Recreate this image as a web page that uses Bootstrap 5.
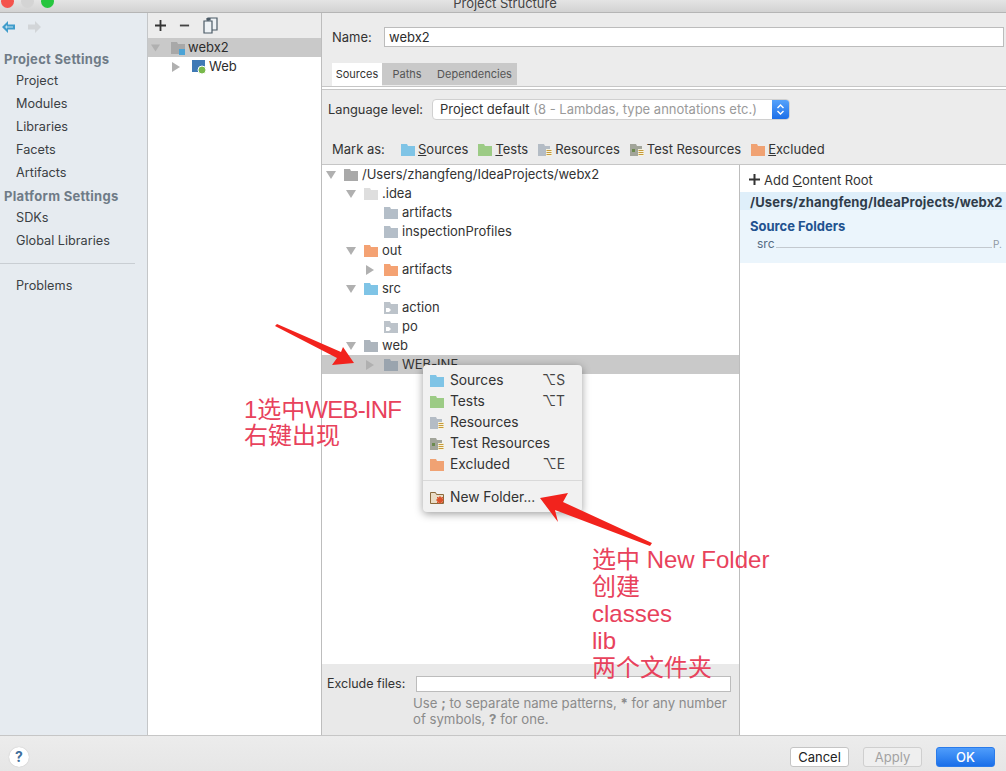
<!DOCTYPE html>
<html lang="en">
<head>
  <meta charset="UTF-8" />
  <meta name="viewport" content="width=device-width, initial-scale=1.0" />
  <title>Project Structure</title>
  <link href="https://cdn.jsdelivr.net/npm/bootstrap@5.3.3/dist/css/bootstrap.min.css" rel="stylesheet">
  <style>
    body { margin: 0; background: #fff; font-family: Inter, "Liberation Sans", Arial, sans-serif; font-size: 13px; color: #2c2c2c; }
    .ij-win { position: relative; width: 1006px; height: 771px; overflow: hidden; }
    .ij-title { height: 13px; background: linear-gradient(#e4e4e4, #d2d2d2); border-bottom: 1px solid #b5b5b5; overflow: hidden; position: relative; }
    .ij-title-text { text-align: center; line-height: 6px; font-size: 13px; color: #444; padding-left: 4px; }
    .ij-lights { position: absolute; left: 1px; top: -5px; gap: 7px; }
    .ij-light { width: 13px; height: 13px; border-radius: 50%; }
    .ij-main { height: 722px; }

    .ij-side { width: 148px; background: #e6ebf0; border-right: 1px solid #c4c6c8; flex: none; }
    .ij-hist { height: 28px; padding: 0 2px; gap: 13px; }
    .ij-side-h { font-weight: 700; color: #6f7b87; font-size: 13px; letter-spacing: .3px; padding-left: 4px; line-height: 19px; margin-top: 3px; }
    .ij-side-h-first { margin-top: 9px; }
    .ij-side-i { padding-left: 16px; line-height: 23px; color: #3b3f44; height: 23px; font-size: 12.7px; }
    .ij-side-sep { height: 1px; background: #c9ced3; margin: 11px 12px 10px 0; }

    .ij-mods { width: 174px; flex: none; background: #fff; border-right: 1px solid #bdbdbd; }
    .ij-tools { height: 25px; background: #ececec; padding-left: 7px; gap: 13px; }
    .ij-row { height: 19px; line-height: 19px; white-space: nowrap; }
    .ij-row-sel { background: #c9c9c9; }
    .ij-mods .ij-row { padding-left: 3px; }
    .ij-twist { width: 18px; flex: none; display: flex; align-items: center; }
    .ij-twist-mod { margin-left: 21px; }
    .ij-ico { width: 14px; height: 12px; flex: none; margin-right: 4px; }
    .ij-ico-root { margin-left: 2px; margin-right: 3px; }
    .ij-ico-web { margin-left: 2px; margin-right: 2px; flex: none; }

    .ij-right { flex: 1 1 auto; min-width: 0; background: #ececec; }
    .ij-name { height: 50px; padding: 14px 2px 0 10px; }
    .ij-name label { width: 52px; flex: none; color: #333; line-height: 20px; }
    .ij-input { height: 20px; border: 1px solid #bcbcbc; border-radius: 0; padding: 0 4px; font-size: 13px; color: #2c2c2c; background: #fff; box-shadow: none; }
    .ij-tabs { height: 23px; margin-left: 10px; }
    .ij-tab { font-size: 11px; color: #555; background: #c9c9c9; line-height: 22px; height: 22px; text-align: center; white-space: nowrap; }
    .ij-tab-on { background: #fff; color: #333; height: 24px; width: 50px; }
    .ij-tab-paths { width: 50px; }
    .ij-tab-deps { width: 85px; }
    .ij-rule { height: 4px; background: #fff; border-top: 1px solid #c6c6c6; border-bottom: 1px solid #c6c6c6; }
    .ij-lang { height: 41px; padding: 9px 0 0 6px; }
    .ij-lang > span:first-child { width: 104px; flex: none; color: #333; line-height: 21px; font-size: 12.8px; }
    .ij-select { width: 358px; height: 21px; background: #fff; border: 1px solid #d0d0d0; border-radius: 4px; padding-left: 7px; line-height: 19px; position: relative; overflow: hidden; color: #333; white-space: nowrap; }
    .ij-select em { font-style: normal; color: #9a9a9a; }
    .ij-step { position: absolute; right: 0; top: 0; bottom: 0; width: 17px; background: linear-gradient(#55a2fb, #1c6fe8); display: flex; align-items: center; justify-content: center; }
    .ij-mark { height: 33px; padding: 5px 0 0 10px; }
    .ij-mark > span:first-child { width: 69px; flex: none; color: #333; }
    .ij-mark-i { margin-right: 10px; color: #333; white-space: nowrap; }
    .ij-mark-i .ij-ico { margin-right: 3px; }
    .ij-body { height: 571px; border-top: 1px solid #c6c6c6; }
    .ij-treecol { width: 418px; flex: none; border-right: 1px solid #bdbdbd; background: #fff; }
    .ij-tree { flex: 1 1 auto; padding-top: 0; }
    .ij-tree .ij-row { display: flex; align-items: center; color: #333; }
    .ij-l0 { padding-left: 4px; }
    .ij-l1 { padding-left: 24px; }
    .ij-l2 { padding-left: 44px; }
    .ij-excl { height: 71px; background: #e9e9e9; padding: 11px 8px 0 5px; }
    .ij-excl label { width: 89px; flex: none; color: #333; font-size: 12.5px; }
    .ij-excl .ij-input { height: 16px; width: 315px; }
    .ij-hint { color: #8b8b8b; padding-left: 86px; line-height: 16px; font-size: 13.2px; margin-top: 1px; white-space: nowrap; }

    .ij-roots { flex: 1 1 auto; background: #fff; min-width: 0; overflow: hidden; }
    .ij-add { height: 27px; padding: 2px 0 0 9px; color: #333; line-height: 18px; }
    .ij-path { height: 18px; line-height: 20px; background: #dfeffa; font-weight: 700; letter-spacing: .15px; padding-left: 10px; color: #2f3c4a; white-space: nowrap; overflow: hidden; }
    .ij-srcs { height: 53px; background: #ebf5fc; padding: 7px 0 0 10px; }
    .ij-srcs-h { font-weight: 700; color: #22528f; line-height: 19px; }
    .ij-srcs-r { padding-left: 7px; color: #556b82; line-height: 16px; font-size: 12px; white-space: nowrap; }
    .ij-srcs-r i { flex: 1 1 auto; border-bottom: 1px solid #c3c9cf; height: 12px; margin: 0 0 0 1px; }
    .ij-srcs-r b { font-weight: 400; color: #8f98a2; font-size: 10px; width: 14px; padding-left: 1px; overflow: hidden; }

    .ij-foot { height: 36px; background: linear-gradient(#ececec, #e6e6e6); border-top: 1px solid #c6c6c6; padding: 11px 11px 0 9px; }
    .ij-help { width: 20px; height: 20px; border-radius: 50%; background: #fff; color: #3f6f9c; font-weight: 700; font-size: 14px; line-height: 20px; text-align: center; box-shadow: 0 0 1px #aaa; }
    .ij-btn { width: 59px; height: 20px; padding: 0; font-size: 13px; line-height: 18px; border-radius: 3px; background: #fff; border: 1px solid #c4c4c4; color: #222; margin-left: 14px; }
    .ij-btn:disabled { background: #efefef; color: #a2a2a2; border-color: #cfcfcf; opacity: 1; }
    .ij-btn-ok { background: linear-gradient(#4f9dfb, #1a6fe9); border-color: #2a7bea; color: #fff; font-weight: 500; }

    .ij-menu { left: 423px; top: 365px; width: 159px; min-width: 0; padding: 5px 0 4px; border: 0; border-radius: 4px; background: #f1f1f1; box-shadow: 0 2px 9px rgba(0,0,0,.38); font-size: 13.8px; margin: 0; }
    .ij-menu .dropdown-item { display: flex; align-items: center; height: 21px; padding: 0 0 0 7px; color: #333; line-height: 21px; }
    .ij-menu .ij-ico { margin-right: 6px; }
    .ij-key { margin-left: auto; padding-right: 17px; color: #444; }
    .ij-menu .dropdown-divider { margin: 5px 0 6px; border-color: #d9d9d9; opacity: 1; }

    .ij-note { position: absolute; z-index: 1001; color: #e8425c; font-family: "Liberation Sans", "Noto Sans CJK SC", sans-serif; font-size: 24px; white-space: nowrap; }
    .ij-note-a { left: 244px; top: 397px; line-height: 26px; }
    .ij-note-b { left: 592px; top: 546px; line-height: 27px; }
    .ij-tight { letter-spacing: -.8px; }
    .ij-arrows { position: absolute; left: 0; top: 0; z-index: 1001; pointer-events: none; }
  </style>
</head>
<body>

<svg width="0" height="0" class="d-block" aria-hidden="true">
  <symbol id="fld" viewBox="0 0 14 12"><path d="M0 0h6l1 2h7v10H0z" fill="currentColor"/></symbol>
  <symbol id="fld-src" viewBox="0 0 14 12"><path d="M0 0h6l1 2h7v10H0z" fill="#bcc3ca"/><path d="M2 6h3l2 2-2 2H2z" fill="#fff"/></symbol>
  <symbol id="fld-res" viewBox="0 0 14 12"><path d="M0 0h6l1 2h5v10H0z" fill="#b4bcc5"/><path d="M8 5h6v7H8z" fill="#f7f3df"/><path d="M8.500 6.500h5M8.500 8.500h5M8.500 10.500h5" stroke="#c69a3a"/></symbol>
  <symbol id="fld-test" viewBox="0 0 14 12"><path d="M0 0h6l1 2h5v10H0z" fill="#a2a59a"/><path d="M2 5h3v3H2z" fill="#6b8a4e"/><path d="M8 5h6v7H8z" fill="#f7f3df"/><path d="M8.500 6.500h5M8.500 8.500h5M8.500 10.500h5" stroke="#c69a3a"/></symbol>
  <symbol id="tri-d" viewBox="0 0 10 8"><path d="M0 0h10L5 8z" fill="#b0b0b0"/></symbol>
  <symbol id="tri-r" viewBox="0 0 8 10"><path d="M0 0l8 5-8 5z" fill="#b0b0b0"/></symbol>
</svg>

<div class="ij-win d-flex flex-column">
  <div class="ij-title">
    <div class="ij-lights d-flex">
      <div class="ij-light" style="background:#f4534c"></div>
      <div class="ij-light" style="background:#d4d4d4"></div>
      <div class="ij-light" style="background:#27c63f"></div>
    </div>
    <div class="ij-title-text">Project Structure</div>
  </div>

  <div class="ij-main d-flex">
    <!-- left settings list -->
    <div class="ij-side">
      <div class="ij-hist d-flex align-items-center">
        <svg width="13" height="12" viewBox="0 0 13 12"><path d="M0 6l6-6v3.500h7v5H6V12z" fill="#3f9ccb"/><path d="M3 6l2-2v1.500h6v1H5V8z" fill="#bfe0ef"/></svg>
        <svg width="13" height="12" viewBox="0 0 13 12"><path d="M13 6L7 0v3.500H0v5h7V12z" fill="#d2d5d8"/></svg>
      </div>
      <div class="ij-side-h ij-side-h-first">Project Settings</div>
      <div class="ij-side-i">Project</div>
      <div class="ij-side-i">Modules</div>
      <div class="ij-side-i">Libraries</div>
      <div class="ij-side-i">Facets</div>
      <div class="ij-side-i">Artifacts</div>
      <div class="ij-side-h">Platform Settings</div>
      <div class="ij-side-i">SDKs</div>
      <div class="ij-side-i">Global Libraries</div>
      <div class="ij-side-sep"></div>
      <div class="ij-side-i">Problems</div>
    </div>

    <!-- module tree -->
    <div class="ij-mods">
      <div class="ij-tools d-flex align-items-center">
        <svg width="11" height="11" viewBox="0 0 12 12"><path d="M5 0h2v5h5v2H7v5H5V7H0V5h5z" fill="#333"/></svg>
        <svg width="11" height="11" viewBox="0 0 12 12"><path d="M1 5h10v2H1z" fill="#444"/></svg>
        <svg width="15" height="17" viewBox="0 0 15 17" fill="#eef2f5" stroke="#4b5a66" stroke-width="1.200"><path d="M5 1h9v12h-9z"/><path d="M1 4h8v12H1z"/><path d="M4 3V1.500h3V3z" fill="#4b5a66"/></svg>
      </div>
      <div class="ij-row ij-row-sel d-flex align-items-center">
        <div class="ij-twist"><svg width="9" height="8"><use href="#tri-d"/></svg></div>
        <svg class="ij-ico ij-ico-root" viewBox="0 0 14 12" style="overflow:visible"><path d="M0 0h6l1 2h7v10H0z" fill="#a8a8a8"/><path d="M8 7h6v6H8z" fill="#4ba3d6"/></svg>
        <span>webx2</span>
      </div>
      <div class="ij-row d-flex align-items-center">
        <div class="ij-twist ij-twist-mod"><svg width="8" height="10"><use href="#tri-r"/></svg></div>
        <svg width="15" height="14" viewBox="0 0 15 14" class="ij-ico-web"><path d="M0 0h13v12H0z" fill="#3f79b5"/><circle cx="10" cy="10" r="4" fill="#79b94c" stroke="#fff"/></svg>
        <span>Web</span>
      </div>
    </div>

    <div class="ij-right d-flex flex-column">
      <div class="ij-name d-flex align-items-start">
        <label>Name:</label>
        <input class="ij-input form-control" value="webx2">
      </div>
      <div class="ij-tabs d-flex">
        <div class="ij-tab ij-tab-on">Sources</div>
        <div class="ij-tab ij-tab-paths">Paths</div>
        <div class="ij-tab ij-tab-deps">Dependencies</div>
      </div>
      <div class="ij-rule"></div>
      <div class="ij-lang d-flex align-items-start">
        <span>Language level:</span>
        <div class="ij-select">Project default <em>(8 - Lambdas, type annotations etc.)</em>
          <span class="ij-step"><svg width="9" height="13" viewBox="0 0 9 13" fill="none" stroke="#fff" stroke-width="1.400"><path d="M1.500 5l3-3 3 3M1.500 8l3 3 3-3"/></svg></span>
        </div>
      </div>
      <div class="ij-mark d-flex align-items-center">
        <span>Mark as:</span>
        <span class="ij-mark-i d-flex align-items-center"><svg class="ij-ico" style="color:#7fc4e6"><use href="#fld"/></svg><span><u>S</u>ources</span></span>
        <span class="ij-mark-i d-flex align-items-center"><svg class="ij-ico" style="color:#9ccb85"><use href="#fld"/></svg><span><u>T</u>ests</span></span>
        <span class="ij-mark-i d-flex align-items-center"><svg class="ij-ico"><use href="#fld-res"/></svg><span>Resources</span></span>
        <span class="ij-mark-i d-flex align-items-center"><svg class="ij-ico"><use href="#fld-test"/></svg><span>Test Resources</span></span>
        <span class="ij-mark-i d-flex align-items-center"><svg class="ij-ico" style="color:#f0a273"><use href="#fld"/></svg><span><u>E</u>xcluded</span></span>
      </div>

      <div class="ij-body d-flex">
        <div class="ij-treecol d-flex flex-column">
          <div class="ij-tree">
            <div class="ij-row ij-l0"><div class="ij-twist"><svg width="10" height="8"><use href="#tri-d"/></svg></div><svg class="ij-ico" style="color:#a9a9a9"><use href="#fld"/></svg><span>/Users/zhangfeng/IdeaProjects/webx2</span></div>
            <div class="ij-row ij-l1"><div class="ij-twist"><svg width="10" height="8"><use href="#tri-d"/></svg></div><svg class="ij-ico" style="color:#dedede"><use href="#fld"/></svg><span>.idea</span></div>
            <div class="ij-row ij-l2"><div class="ij-twist"></div><svg class="ij-ico" style="color:#b4bec8"><use href="#fld"/></svg><span>artifacts</span></div>
            <div class="ij-row ij-l2"><div class="ij-twist"></div><svg class="ij-ico" style="color:#b4bec8"><use href="#fld"/></svg><span>inspectionProfiles</span></div>
            <div class="ij-row ij-l1"><div class="ij-twist"><svg width="10" height="8"><use href="#tri-d"/></svg></div><svg class="ij-ico" style="color:#f4a273"><use href="#fld"/></svg><span>out</span></div>
            <div class="ij-row ij-l2"><div class="ij-twist"><svg width="8" height="10"><use href="#tri-r"/></svg></div><svg class="ij-ico" style="color:#f4a273"><use href="#fld"/></svg><span>artifacts</span></div>
            <div class="ij-row ij-l1"><div class="ij-twist"><svg width="10" height="8"><use href="#tri-d"/></svg></div><svg class="ij-ico" style="color:#7fc4e6"><use href="#fld"/></svg><span>src</span></div>
            <div class="ij-row ij-l2"><div class="ij-twist"></div><svg class="ij-ico"><use href="#fld-src"/></svg><span>action</span></div>
            <div class="ij-row ij-l2"><div class="ij-twist"></div><svg class="ij-ico"><use href="#fld-src"/></svg><span>po</span></div>
            <div class="ij-row ij-l1"><div class="ij-twist"><svg width="10" height="8"><use href="#tri-d"/></svg></div><svg class="ij-ico" style="color:#adb5bd"><use href="#fld"/></svg><span>web</span></div>
            <div class="ij-row ij-l2 ij-row-sel"><div class="ij-twist"><svg width="8" height="10"><use href="#tri-r"/></svg></div><svg class="ij-ico" style="color:#9aa4ae"><use href="#fld"/></svg><span>WEB-INF</span></div>
          </div>
          <div class="ij-excl">
            <div class="d-flex align-items-center">
              <label>Exclude files:</label>
              <input class="ij-input form-control">
            </div>
            <div class="ij-hint">Use <b>;</b> to separate name patterns, <b>*</b> for any number<br>of symbols, <b>?</b> for one.</div>
          </div>
        </div>
        <div class="ij-roots">
          <div class="ij-add d-flex align-items-center">
            <svg width="11" height="11" viewBox="0 0 11 11" class="me-1"><path d="M4.500 0h2v4.500H11v2H6.500V11h-2V6.500H0v-2h4.500z" fill="#333"/></svg>
            <span>Add <u>C</u>ontent Root</span>
          </div>
          <div class="ij-path">/Users/zhangfeng/IdeaProjects/webx2 ×</div>
          <div class="ij-srcs">
            <div class="ij-srcs-h">Source Folders</div>
            <div class="ij-srcs-r d-flex"><span>src</span><i></i><b>P.</b></div>
          </div>
        </div>
      </div>
    </div>
  </div>

  <div class="ij-foot d-flex align-items-start">
    <div class="ij-help">?</div>
    <button class="btn ij-btn ms-auto">Cancel</button>
    <button class="btn ij-btn" disabled>Apply</button>
    <button class="btn ij-btn ij-btn-ok">OK</button>
  </div>

  <!-- context menu -->
  <div class="dropdown-menu show ij-menu">
    <a class="dropdown-item"><svg class="ij-ico" style="color:#7fc4e6"><use href="#fld"/></svg>Sources<span class="ij-key">⌥S</span></a>
    <a class="dropdown-item"><svg class="ij-ico" style="color:#9ccb85"><use href="#fld"/></svg>Tests<span class="ij-key">⌥T</span></a>
    <a class="dropdown-item"><svg class="ij-ico"><use href="#fld-res"/></svg>Resources</a>
    <a class="dropdown-item"><svg class="ij-ico"><use href="#fld-test"/></svg>Test Resources</a>
    <a class="dropdown-item"><svg class="ij-ico" style="color:#f0a273"><use href="#fld"/></svg>Excluded<span class="ij-key">⌥E</span></a>
    <div class="dropdown-divider"></div>
    <a class="dropdown-item"><svg class="ij-ico" viewBox="0 0 14 12"><path d="M.5.500h5l1 2h7v9H.5z" fill="#e9dcc6" stroke="#8a6a3c"/><circle cx="10" cy="8" r="3" fill="#d9532c"/><path d="M10 4v8M6 8h8M7 5l6 6M13 5l-6 6" stroke="#d9532c"/></svg>New Folder...</a>
  </div>

  <!-- screenshot annotations -->
  <svg class="ij-arrows" width="1006" height="771" viewBox="0 0 1006 771">
    <path d="M275 326l2-2 64 28 2-5 11 16-22 2 5-7z" fill="#f2231d"/>
    <path d="M540 498l28-5-5 9 89 41-2 3-95-36 3 12z" fill="#f2231d"/>
  </svg>
  <div class="ij-note ij-note-a">1选中<span class="ij-tight">WEB-INF</span><br>右键出现</div>
  <div class="ij-note ij-note-b">选中 New Folder<br>创建<br>classes<br>lib<br>两个文件夹</div>
</div>

<script src="https://cdn.jsdelivr.net/npm/bootstrap@5.3.3/dist/js/bootstrap.bundle.min.js"></script>
</body>
</html>
